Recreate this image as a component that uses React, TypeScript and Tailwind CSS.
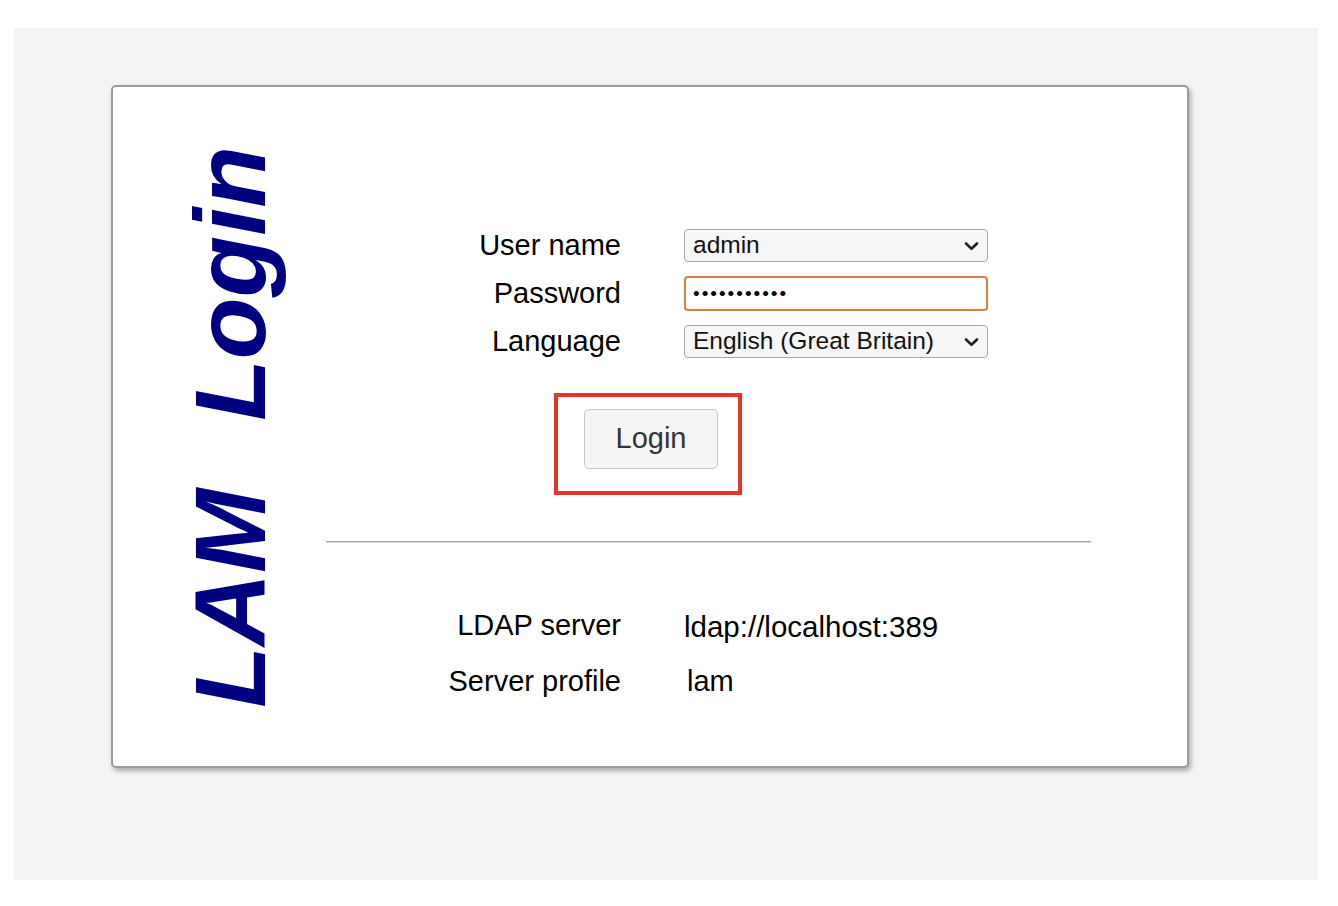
import {FC, memo} from 'react';

const font = "font-['Liberation_Sans',Arial,sans-serif]";

const Chevron: FC = () => (
  <svg aria-hidden="true" className="h-[10px] w-[15px] flex-shrink-0" viewBox="0 0 15 10">
    <polyline fill="none" points="2,2.5 7.5,7.8 13,2.5" stroke="#222" strokeLinecap="round" strokeLinejoin="round" strokeWidth="2.6" />
  </svg>
);

const FakeSelect: FC<{value: string}> = ({value}) => (
  <div className="flex h-[33px] w-[304px] items-center justify-between rounded-[4px] border border-[#a9a9a9] bg-[#f6f6f6] pl-[8px] pr-[8px] text-[24.5px] leading-none text-[#111]">
    <span>{value}</span>
    <Chevron />
  </div>
);

const serverInfo = [
  {label: 'LDAP server', value: 'ldap://localhost:389', extra: 'pt-[2px] text-[29.5px]'},
  {label: 'Server profile', value: 'lam', extra: 'pl-[3px]'},
];

const App: FC = memo(() => {
  return (
    <div className={`h-[906px] w-[1338px] bg-white pl-[14px] pt-[28px] ${font}`}>
      <div className="h-[852px] w-[1304px] bg-[#f4f4f4] pl-[97px] pt-[57px]">
        <div className="flex h-[683px] w-[1078px] rounded-[5px] border-2 border-[#9c9c9c] bg-white pl-[67px] shadow-[2px_3px_5px_rgba(0,0,0,0.3)]">
          {/* vertical title, reads bottom to top */}
          <div className="w-[102px] rotate-180 self-center whitespace-nowrap text-[101px] font-bold italic leading-none text-[#000080] [writing-mode:vertical-rl]">
            <span className="me-[12px]">LAM{'\u00a0\u00a0'}</span>Login
          </div>

          <div className="ml-[44px] flex w-[765px] flex-col pt-[142px]">
            <div className="grid grid-cols-[295px_304px] items-center gap-x-[63px] gap-y-[14px] text-[29px] leading-none text-black">
              <span className="text-right">User name</span>
              <FakeSelect value="admin" />
              <span className="text-right">Password</span>
              <div className="flex h-[35px] w-[304px] items-center rounded-[4px] border-2 border-[#d4823f] bg-white pl-[7px] text-[19px] leading-none tracking-[2px] text-black">
                •••••••••••
              </div>
              <span className="text-right">Language</span>
              <FakeSelect value="English (Great Britain)" />
            </div>

            <div className="ml-[228px] mt-[35px] w-[188px] border-4 border-[#e8332a] pb-[22px] pl-[26px] pt-[12px]">
              <button
                className="flex h-[60px] w-[134px] items-center justify-center rounded-[5px] border border-[#c8c8c8] bg-[#f5f5f5] text-[29px] text-[#333]"
                type="button">
                Login
              </button>
            </div>

            <div className="mt-[46px] h-[2px] w-full border-b border-[#d4d4d4] bg-[#a9a9a9]" />

            <div className="mt-[65px] flex flex-col gap-y-[20px] text-[29px] leading-[34px] text-black">
              {serverInfo.map(({label, value, extra}) => (
                <div className="flex gap-x-[63px]" key={label}>
                  <span className="w-[295px] text-right">{label}</span>
                  <span className={extra}>{value}</span>
                </div>
              ))}
            </div>
          </div>
        </div>
      </div>
    </div>
  );
});

App.displayName = 'App';
export default App;
